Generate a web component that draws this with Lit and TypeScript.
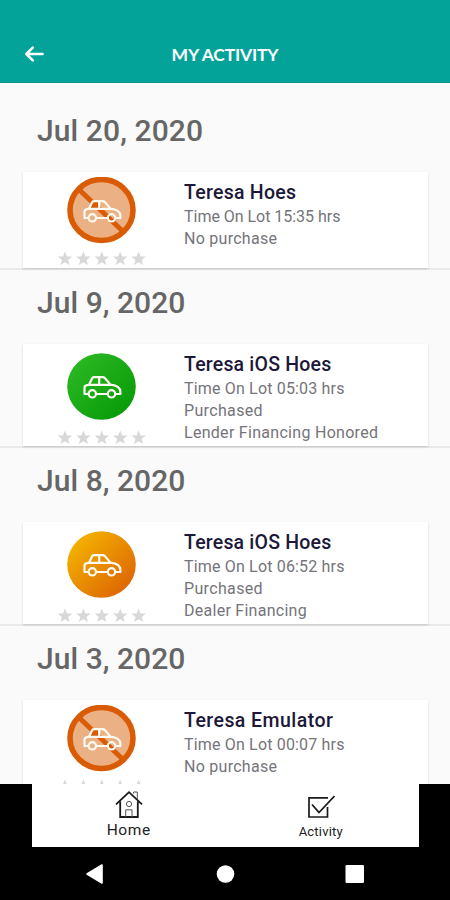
import { LitElement, html, css, svg } from "lit";
import { customElement, property } from "lit/decorators.js";
import { styleMap } from "lit/directives/style-map.js";

type Kind = "none" | "lender" | "dealer";

interface Line {
  text: string;
  spacing: number;
}

interface Entry {
  date: Line;
  kind: Kind;
  name: Line;
  lines: Line[];
}

const t = (text: string, spacing: number): Line => ({ text, spacing });

const ENTRIES: Entry[] = [
  { date: t("Jul 20, 2020", 0.1), kind: "none", name: t("Teresa Hoes", 0.27), lines: [t("Time On Lot 15:35 hrs", -0.03), t("No purchase", 0.27)] },
  { date: t("Jul 9, 2020", 0.05), kind: "lender", name: t("Teresa iOS Hoes", 0.2), lines: [t("Time On Lot 05:03 hrs", 0.17), t("Purchased", 0.35), t("Lender Financing Honored", 0.29)] },
  { date: t("Jul 8, 2020", 0.05), kind: "dealer", name: t("Teresa iOS Hoes", 0.2), lines: [t("Time On Lot 06:52 hrs", 0.17), t("Purchased", 0.35), t("Dealer Financing", 0.27)] },
  { date: t("Jul 3, 2020", 0.05), kind: "none", name: t("Teresa Emulator", 0.45), lines: [t("Time On Lot 00:07 hrs", 0.17), t("No purchase", 0.27)] },
];

const spaced = (l: Line) => styleMap({ letterSpacing: `${l.spacing}px` });

@customElement("status-badge")
export class StatusBadge extends LitElement {
  @property() kind: Kind = "none";

  static styles = css`
    :host { display: block; width: 69px; height: 67px; }
    svg { display: block; }
  `;

  render() {
    const banned = this.kind === "none";
    const stops = this.kind === "lender" ? ["#2bb923", "#079a08"] : ["#f4b400", "#dd6404"];
    return html`<svg width="69" height="67" viewBox="0 0 69 67">
      <defs>
        <linearGradient id="fill" x1="0.1" y1="0.1" x2="0.9" y2="0.9">
          <stop offset="0" stop-color=${stops[0]} />
          <stop offset="1" stop-color=${stops[1]} />
        </linearGradient>
      </defs>
      ${banned
        ? svg`<ellipse cx="34.5" cy="33" rx="31.5" ry="30.5" fill="#ebb083" stroke="#d95c05" stroke-width="5.6" />
            <path d="M12 12.5L56 54.5" stroke="#d95c05" stroke-width="5" />
            <path d="M23 31.5L26 25H31.5V31.5Z" fill="#d95c05" />`
        : svg`<ellipse cx="34.5" cy="33.5" rx="34.3" ry="33.3" fill="url(#fill)" />`}
      <g fill="none" stroke="#fffaf2" stroke-width="2.2" stroke-linejoin="round" stroke-linecap="round">
        <path d="M21 41H17.5V34.8Q17.5 32.6 20 32.2L22 31.8L25 25.5Q25.6 24.2 27 24.2H35.5Q37 24.2 38 25.3L43.5 31.6Q53.4 32.7 53.4 39V41H48.8M29.6 41H40.3M22 31.9H43.5M32.2 24.5V31.8" />
        <circle cx="25.3" cy="40.8" r="3.7" />
        <circle cx="44.5" cy="40.8" r="3.7" />
      </g>
    </svg>`;
  }
}

@customElement("activity-card")
export class ActivityCard extends LitElement {
  @property({ attribute: false }) entry!: Entry;

  static styles = css`
    :host { display: block; border-bottom: 2px solid #e9e9e9; }
    .date { height: 74px; padding-left: 37px; box-sizing: border-box; font-size: 30px; line-height: 66px; font-weight: 500; color: #666; }
    .card { display: flex; box-sizing: border-box; height: 102px; margin: 0 22px 0 23px; background: #fff; box-shadow: 0 1px 2px rgba(0, 0, 0, 0.16); }
    .card.short { height: 96px; }
    .side { display: flex; flex-direction: column; align-items: center; width: 157px; padding-top: 8.5px; box-sizing: border-box; }
    .short .side { padding-top: 4.5px; }
    .stars { display: block; margin-top: 10.5px; }
    .short .stars { margin-top: 7px; }
    .text { padding: 9px 0 0 4px; white-space: nowrap; }
    .name { font-size: 19.5px; line-height: 24px; font-weight: 500; color: #1b1838; padding-bottom: 0.5px; }
    .line { font-size: 16px; line-height: 22px; color: #74747a; }
  `;

  render() {
    const e = this.entry;
    return html`
      <div class="date"><span style=${spaced(e.date)}>${e.date.text}</span></div>
      <div class="card ${e.kind === "none" ? "short" : ""}">
        <div class="side">
          <status-badge kind=${e.kind}></status-badge>
          <svg class="stars" width="90" height="15" viewBox="0 0 90 15" fill="#d8d8d8">
            ${[8, 26.4, 44.8, 63.2, 81.6].map(
              (x) => svg`<path transform="translate(${x} 7.6)" d="M0-7L2-2.2L7.2-2L3.1 1.4L4.6 6.4L0 3.6L-4.6 6.4L-3.1 1.4L-7.2-2L-2-2.2Z" />`
            )}
          </svg>
        </div>
        <div class="text">
          <div class="name"><span style=${spaced(e.name)}>${e.name.text}</span></div>
          ${e.lines.map((l) => html`<div class="line"><span style=${spaced(l)}>${l.text}</span></div>`)}
        </div>
      </div>
    `;
  }
}

@customElement("app-root")
export class AppRoot extends LitElement {
  static styles = css`
    :host { display: flex; flex-direction: column; width: 450px; height: 900px; overflow: hidden; background: #fafafa; font-family: Roboto, "Liberation Sans", sans-serif; }
    .header { display: grid; grid-template-columns: 68px 1fr 68px; align-items: center; height: 83px; padding-top: 25px; box-sizing: border-box; background: #03a399; border-bottom: 1px solid #12938a; color: #fff; }
    .back { display: block; margin-left: 24px; }
    .title { text-align: center; font-family: Lato, sans-serif; font-weight: 700; font-size: 17.5px; line-height: 24px; padding-top: 2px; letter-spacing: -0.2px; }
    .list { flex: 1; min-height: 0; overflow: hidden; padding-top: 15px; }
    .bottom { height: 116px; background: #000; display: flex; flex-direction: column; }
    .tabs { display: grid; grid-template-columns: 1fr 1fr; height: 63px; margin: 0 31px 0 32px; background: #fff; color: #222; }
    .tab { display: flex; flex-direction: column; align-items: center; }
    .tab svg { display: block; }
    .home { padding-top: 6px; }
    .home span { font-size: 15.5px; line-height: 18px; margin-top: 3px; letter-spacing: 0.6px; }
    .activity { padding: 11px 3px 0 0; }
    .activity span { font-size: 13px; line-height: 16px; margin-top: 4.5px; letter-spacing: 0.2px; }
    .system { display: block; }
  `;

  render() {
    return html`
      <div class="header">
        <svg class="back" width="21" height="18" viewBox="0 0 21 18" fill="none" stroke="#fff" stroke-width="2.5" stroke-linecap="round" stroke-linejoin="round">
          <path d="M18.6 9H2.3M8.8 2.6L2.3 9L8.8 15.4" />
        </svg>
        <div class="title">MY ACTIVITY</div>
      </div>
      <div class="list">
        ${ENTRIES.map((e) => html`<activity-card .entry=${e}></activity-card>`)}
      </div>
      <div class="bottom">
        <div class="tabs">
          <div class="tab home">
            <svg width="28" height="28" viewBox="0 0 28 28" fill="none" stroke="#1a1a1a">
              <path stroke-width="1.8" d="M1 14.3L14 2.2L27 14.3M5.2 11.5V27H22.8V11.5" />
              <path stroke-width="1" stroke="#555" d="M18.5 3.5V2H22.3V9M10.7 27V19.8H17V27" />
              <circle cx="14" cy="14" r="2.6" stroke-width="1" stroke="#555" />
            </svg>
            <span>Home</span>
          </div>
          <div class="tab activity">
            <svg width="28" height="24" viewBox="0 0 28 24" fill="none" stroke="#1a1a1a">
              <path stroke-width="1.7" d="M21 2.8H2V22H20.5V12" />
              <path stroke-width="1.8" d="M5 9.5L12 17.5L27.5 1" />
            </svg>
            <span>Activity</span>
          </div>
        </div>
        <svg class="system" width="450" height="53" viewBox="0 0 450 53" fill="#fff">
          <path d="M87 27L102 18V36Z" stroke="#fff" stroke-width="1.6" stroke-linejoin="round" />
          <circle cx="225.5" cy="27" r="8.8" />
          <rect x="345.5" y="18" width="18.5" height="18" rx="1.3" />
        </svg>
      </div>
    `;
  }
}
